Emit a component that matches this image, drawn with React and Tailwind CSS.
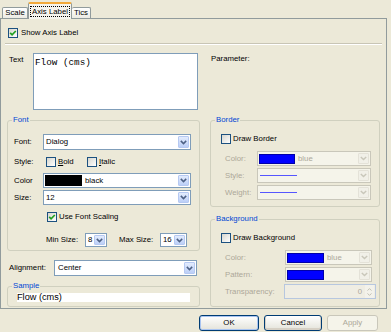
import React from "react";

function Check({ checked }) {
  return (
    <span className="w-[10px] h-[10px] shrink-0 border border-[#1c5180] bg-linear-to-br from-[#d6d6cf] to-white flex items-center justify-center">
      {checked && (
        <svg width="8" height="8" viewBox="0 0 8 8">
          <path d="M1.2 3.8 L3.1 5.8 L6.8 2" stroke="#21a121" strokeWidth="1.7" fill="none" />
        </svg>
      )}
    </span>
  );
}

function Arrow({ disabled }) {
  if (disabled) {
    return (
      <span className="ml-auto mr-px h-[calc(100%-2px)] w-[11px] shrink-0 rounded-[1px] border border-[#e4e2d8] bg-[#f1f0e8] flex items-center justify-center">
        <svg width="7" height="5" viewBox="0 0 7 5">
          <path d="M0.8 0.9 L3.5 3.6 L6.2 0.9" stroke="#c9c7ba" strokeWidth="1.4" fill="none" />
        </svg>
      </span>
    );
  }
  return (
    <span className="ml-auto mr-px h-[calc(100%-2px)] w-[11px] shrink-0 rounded-[1px] border border-[#b6c9f2] bg-linear-to-b from-[#e3ecfd] to-[#bccff7] flex items-center justify-center">
      <svg width="7" height="5" viewBox="0 0 7 5">
        <path d="M0.8 0.9 L3.5 3.6 L6.2 0.9" stroke="#4d6185" strokeWidth="1.5" fill="none" />
      </svg>
    </span>
  );
}

function Combo({ className, disabled, children }) {
  return (
    <div
      className={`flex items-center shrink-0 border ${
        disabled ? "border-[#c9c7ba] bg-[#f5f4ea] text-[#aca899]" : "border-[#7f9db9] bg-white"
      } ${className}`}
    >
      {children}
      <Arrow disabled={disabled} />
    </div>
  );
}

function Group({ title, className, children }) {
  return (
    <div className={`relative border border-[#d0d0bf] rounded-[3px] ${className}`}>
      <span className="absolute -top-[6px] left-[4px] px-px bg-[#ece9d8] text-[#0046d5] leading-[10px]">
        {title}
      </span>
      {children}
    </div>
  );
}

export default function App() {
  return (
    <div className="w-[391px] h-[332px] bg-[#ece9d8] overflow-hidden font-['Liberation_Sans',sans-serif] text-[7.8px] leading-[10px] text-black">
      {/* Tabs */}
      <div className="h-[18px] flex items-end pl-[2px]">
        <div className="w-[26px] h-[11px] border border-b-0 border-[#919b9c] rounded-t-[2px] bg-linear-to-b from-white to-[#ecebe4] flex items-center justify-center">
          Scale
        </div>
        <div className="relative z-10 -mb-px w-[44px] h-[17px] border border-b-0 border-[#919b9c] border-t-2 border-t-[#f2a93a] rounded-t-[2px] bg-[#f5f4ee] flex items-center justify-center">
          <span className="border border-dotted border-black px-[1px] leading-[9px]">Axis Label</span>
        </div>
        <div className="w-[19px] h-[11px] border border-b-0 border-l-0 border-[#919b9c] rounded-t-[2px] bg-linear-to-b from-white to-[#ecebe4] flex items-center justify-center">
          Tics
        </div>
      </div>

      {/* Panel */}
      <div className="w-[387px] h-[291px] border border-[#919b9c] flex flex-col">
        <div className="flex items-center gap-[3px] ml-[7px] mt-[9px] h-[10px]">
          <Check checked />
          <span>Show Axis Label</span>
        </div>
        <div className="ml-[4px] mt-[5px] w-[377px] h-[2px] border-t border-t-[#c8c5b5] border-b border-b-white" />

        <div className="flex ml-[6px]">
          {/* Left column */}
          <div className="w-[193px] flex flex-col">
            <div className="mt-[8px] h-[57px] flex items-start">
              <span className="w-[26px] pl-[2px] mt-[2px]">Text</span>
              <div className="w-[165px] h-[57px] border border-[#7f9db9] bg-white pl-[1px] pt-[4px] font-['Liberation_Mono',monospace] text-[9.3px] leading-[10px]">
                Flow (cms)
              </div>
            </div>

            <Group title="Font" className="mt-[10px] h-[131px] pl-[6px] pt-[13px]">
              <div className="flex items-center h-[16px]">
                <span className="w-[29px]">Font:</span>
                <Combo className="w-[148px] h-[16px]">
                  <span className="pl-[2px]">Dialog</span>
                </Combo>
              </div>
              <div className="flex items-center h-[10px] mt-[7px]">
                <span className="w-[29px]">Style:</span>
                <div className="ml-[3px] w-[41px] flex items-center gap-[2px]">
                  <Check />
                  <span>
                    <span className="underline">B</span>old
                  </span>
                </div>
                <div className="flex items-center gap-[2px]">
                  <Check />
                  <span>
                    <span className="underline">I</span>talic
                  </span>
                </div>
              </div>
              <div className="flex items-center h-[15px] mt-[6px]">
                <span className="w-[29px]">Color</span>
                <Combo className="w-[148px] h-[15px]">
                  <span className="ml-px w-[37px] h-[11px] bg-black" />
                  <span className="ml-[3px]">black</span>
                </Combo>
              </div>
              <div className="flex items-center h-[15px] mt-[2px]">
                <span className="w-[29px]">Size:</span>
                <Combo className="w-[148px] h-[15px]">
                  <span className="pl-[2px]">12</span>
                </Combo>
              </div>
              <div className="flex items-center h-[10px] mt-[7px] pl-[33px] gap-[2px]">
                <Check checked />
                <span>Use Font Scaling</span>
              </div>
              <div className="flex items-center h-[14px] mt-[11px] pl-[32px]">
                <span className="w-[39px]">Min Size:</span>
                <Combo className="w-[22px] h-[14px]">
                  <span className="pl-[2px]">8</span>
                </Combo>
                <span className="ml-[12px] w-[41px]">Max Size:</span>
                <Combo className="w-[27px] h-[14px]">
                  <span className="pl-[2px]">16</span>
                </Combo>
              </div>
            </Group>

            <div className="flex items-center h-[16px] mt-[9px]">
              <span className="pl-[2px] w-[47px]">Alignment:</span>
              <Combo className="w-[143px] h-[16px]">
                <span className="pl-[3px]">Center</span>
              </Combo>
            </div>

            <Group title="Sample" className="mt-[10px] h-[21px] pl-[9px] pt-[6px]">
              <div className="w-[173px] h-[9px] bg-white text-[9.2px] leading-[9px]">Flow (cms)</div>
            </Group>
          </div>

          {/* Right column */}
          <div className="ml-[10px] w-[170px] flex flex-col">
            <div className="mt-[8px] h-[57px] pl-px pt-[1px]">Parameter:</div>

            <Group title="Border" className="mt-[10px] h-[87px] pt-[13px] pl-[10px]">
              <div className="flex items-center h-[10px] gap-[2px]">
                <Check />
                <span>Draw Border</span>
              </div>
              <div className="flex items-center h-[15px] mt-[7px] pl-[4px]">
                <span className="w-[32px] text-[#aca899]">Color:</span>
                <Combo disabled className="w-[114px] h-[15px]">
                  <span className="ml-px w-[36px] h-[10px] bg-[#0000ff] border border-[#0000a8]" />
                  <span className="ml-[3px]">blue</span>
                </Combo>
              </div>
              <div className="flex items-center h-[15px] mt-[2px] pl-[4px]">
                <span className="w-[32px] text-[#aca899]">Style:</span>
                <Combo disabled className="w-[114px] h-[15px]">
                  <span className="ml-[2px] w-[37px] h-px bg-[#5656ff]" />
                </Combo>
              </div>
              <div className="flex items-center h-[15px] mt-[2px] pl-[4px]">
                <span className="w-[32px] text-[#aca899]">Weight:</span>
                <Combo disabled className="w-[114px] h-[15px]">
                  <span className="ml-[2px] w-[37px] h-px bg-[#5656ff]" />
                </Combo>
              </div>
            </Group>

            <Group title="Background" className="mt-[12px] h-[88px] pt-[13px] pl-[10px]">
              <div className="flex items-center h-[10px] gap-[2px]">
                <Check />
                <span>Draw Background</span>
              </div>
              <div className="flex items-center h-[15px] mt-[7px] pl-[4px]">
                <span className="w-[60px] text-[#aca899]">Color:</span>
                <Combo disabled className="w-[87px] h-[15px]">
                  <span className="ml-px w-[37px] h-[10px] bg-[#0000ff] border border-[#0000a8]" />
                  <span className="ml-[3px]">blue</span>
                </Combo>
              </div>
              <div className="flex items-center h-[15px] mt-[2px] pl-[4px]">
                <span className="w-[60px] text-[#aca899]">Pattern:</span>
                <Combo disabled className="w-[87px] h-[15px]">
                  <span className="ml-px w-[37px] h-[10px] bg-[#0000ff] border border-[#0000a8]" />
                </Combo>
              </div>
              <div className="flex items-center h-[15px] mt-[2px] pl-[4px]">
                <span className="w-[59px] text-[#aca899]">Transparency:</span>
                <div className="w-[92px] h-[15px] border border-[#b7c7df] bg-[#efede3] flex items-center justify-end text-[#aca899]">
                  <span className="pr-[3px]">0</span>
                  <span className="mr-px w-[9px] h-[13px] flex flex-col items-center justify-center gap-[2px] bg-[#f3f2eb]">
                    <svg width="5" height="3" viewBox="0 0 5 3">
                      <path d="M0.5 2.6 L2.5 0.6 L4.5 2.6" stroke="#c2c0b3" strokeWidth="1" fill="none" />
                    </svg>
                    <svg width="5" height="3" viewBox="0 0 5 3">
                      <path d="M0.5 0.4 L2.5 2.4 L4.5 0.4" stroke="#c2c0b3" strokeWidth="1" fill="none" />
                    </svg>
                  </span>
                </div>
              </div>
            </Group>
          </div>
        </div>
      </div>

      {/* Buttons */}
      <div className="flex justify-end gap-[5px] pr-[13px] mt-[6px]">
        <button className="w-[60px] h-[16px] rounded-[3px] border border-[#003c74] bg-linear-to-b from-white to-[#e4e3da] shadow-[inset_0_0_0_1px_#a9c4f1] leading-[10px]">
          OK
        </button>
        <button className="w-[58px] h-[16px] rounded-[3px] border border-[#003c74] bg-linear-to-b from-white to-[#e4e3da] shadow-[inset_0_-1px_0_1px_#d6d0c5] leading-[10px]">
          Cancel
        </button>
        <button className="w-[51px] h-[16px] rounded-[3px] border border-[#c9c7ba] bg-[#f5f4ea] text-[#aca899] leading-[10px]">
          Apply
        </button>
      </div>
    </div>
  );
}
